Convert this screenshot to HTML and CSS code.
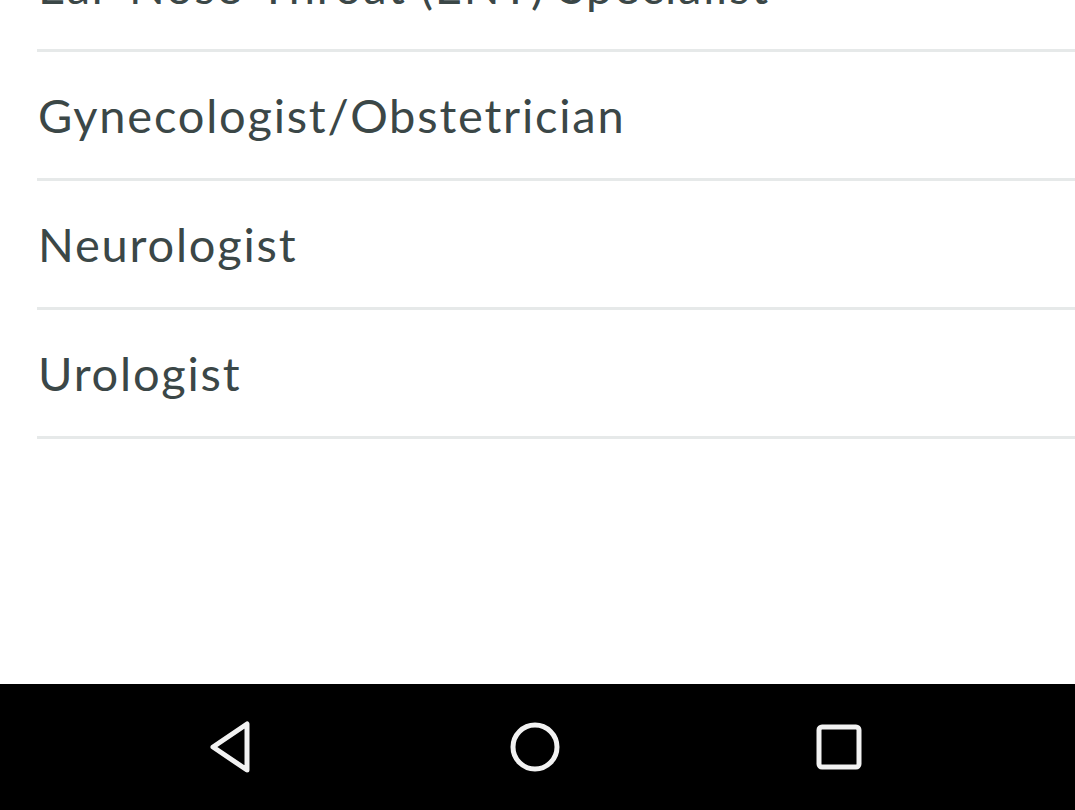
FILE: index.html
```html
<!DOCTYPE html>
<html lang="en">
<head>
<meta charset="utf-8">
<title>Specialists</title>
<link rel="stylesheet" href="styles.css">
</head>
<body>
<div class="screen">
  <div class="content">
    <ul class="list">
      <li class="item">Ear-Nose-Throat (ENT) Specialist</li>
      <li class="item">Gynecologist/Obstetrician</li>
      <li class="item">Neurologist</li>
      <li class="item">Urologist</li>
    </ul>
  </div>
  <nav class="navbar">
    <button class="nav-btn" aria-label="Back">
      <svg width="48" height="56" viewBox="0 0 48 56"><path d="M40 5 L40 51 L6 28 Z" fill="none" stroke="#f2f2f2" stroke-width="5" stroke-linejoin="round"/></svg>
    </button>
    <button class="nav-btn" aria-label="Home">
      <svg width="56" height="56" viewBox="0 0 56 56"><circle cx="28" cy="28" r="22" fill="none" stroke="#f2f2f2" stroke-width="5"/></svg>
    </button>
    <button class="nav-btn" aria-label="Recents">
      <svg width="56" height="56" viewBox="0 0 56 56"><rect x="8" y="8" width="40" height="40" rx="3" fill="none" stroke="#f2f2f2" stroke-width="5"/></svg>
    </button>
  </nav>
</div>
</body>
</html>
```

FILE: styles.css
```css
html, body {
  margin: 0;
  padding: 0;
  background: #ffffff;
}
.screen {
  width: 1075px;
  height: 810px;
  display: flex;
  flex-direction: column;
  overflow: hidden;
}
.content {
  flex: 1;
  overflow: hidden;
  background: #ffffff;
}
.list {
  list-style: none;
  margin: -77px 0 0 37px;
  padding: 0;
}
.item {
  height: 126px;
  border-bottom: 3px solid #e6e9e9;
  display: flex;
  align-items: center;
  padding-left: 1px;
  font-family: Lato, "Open Sans", sans-serif;
  font-size: 47px;
  letter-spacing: 1.8px;
  color: #3b4747;
  white-space: nowrap;
}
.navbar {
  height: 126px;
  background: #000000;
  display: flex;
  align-items: center;
  justify-content: center;
  gap: 248px;
  padding-right: 6px;
}
.nav-btn {
  background: none;
  border: none;
  padding: 0;
  display: flex;
  align-items: center;
  justify-content: center;
  width: 56px;
  height: 56px;
}
```
